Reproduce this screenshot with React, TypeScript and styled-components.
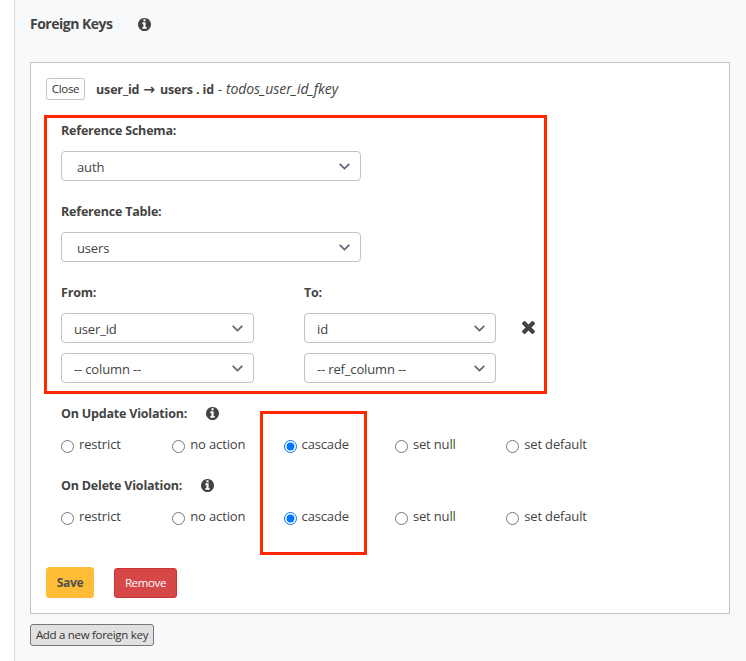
import React from "react";
import styled, { createGlobalStyle } from "styled-components";

const GlobalStyle = createGlobalStyle`
  * { box-sizing: border-box; }
  body {
    margin: 0;
    background: #fff;
    color: #434343;
    font: 13px/18px "Open Sans", sans-serif;
    letter-spacing: -0.15px;
    white-space: nowrap;
    overflow: hidden;
  }
`;

const Page = styled.main`
  height: 661px;
  margin-left: 14px;
  padding: 14px 16px 0 15px;
  background: #f8f9fb;
  border-left: 1px solid #dcdcdc;
`;

const Heading = styled.h2`
  display: flex;
  align-items: center;
  gap: 25px;
  height: 20px;
  margin: 0 0 28px;
  font-size: 14px;
  font-weight: 700;
  letter-spacing: -0.5px;
`;

const Card = styled.section`
  position: relative;
  height: 552px;
  padding: 15px;
  background: #fff;
  border: 1px solid #c2c2c2;
`;

const CardHeader = styled.header`
  display: flex;
  align-items: center;
  height: 22px;
`;

const SmallButton = styled.button`
  width: 39px;
  height: 22px;
  padding: 0;
  color: #333;
  background: #fff;
  border: 1px solid #c4c4c4;
  border-radius: 3px;
  font: 11.5px/20px "Open Sans", sans-serif;
  letter-spacing: -0.3px;
`;

const AddButton = styled(SmallButton)`
  display: block;
  width: 124px;
  margin-top: 10px;
  background: #e1e1e1;
  border-color: #767676;
`;

const KeyName = styled.div`
  display: flex;
  align-items: baseline;
  gap: 4px;
  margin-left: 11px;
  b { font-size: 12.5px; letter-spacing: -0.15px; }
  i { font-size: 14px; letter-spacing: -0.1px; }
`;

const Arrow = styled.span`
  margin-right: 1px;
  font: 700 14px/18px "DejaVu Sans", sans-serif;
`;

const Form = styled.div`
  padding: 21px 15px 0;
`;

const Field = styled.div`
  height: 81px;
`;

const Label = styled.div`
  display: flex;
  align-items: center;
  gap: 19px;
  height: 18px;
  padding-top: 2px;
  font-size: 12.5px;
  font-weight: 700;
  letter-spacing: -0.2px;
  svg { margin-top: -2px; }
`;

const SelectBox = styled.div<{ $wide?: boolean }>`
  display: flex;
  align-items: center;
  justify-content: space-between;
  width: ${(p) => (p.$wide ? "300px" : "auto")};
  height: 30px;
  padding: 2px 10px 0 ${(p) => (p.$wide ? 15 : 12)}px;
  background: #fff;
  border: 1px solid #c2c2c2;
  border-radius: 4px;
  svg { margin-top: -2px; }
`;

const Spaced = styled.div`
  margin-top: 12px;
`;

const Mapping = styled.div`
  display: grid;
  grid-template-columns: 193px 192px 14px;
  column-gap: 50px;
  height: 121px;
`;

const MapColumn = styled.div`
  display: flex;
  flex-direction: column;
  gap: 10px;
  ${Label} { margin-bottom: 2px; }
`;

const RemoveRow = styled.div`
  margin: 38px 0 0 -24px;
  svg { display: block; }
`;

const Violation = styled.div`
  height: 72px;
`;

const Options = styled.div`
  display: grid;
  grid-template-columns: repeat(5, 111.3px);
  margin-top: 13px;
`;

const Option = styled.label`
  display: flex;
  gap: 5px;
  height: 20px;
  input { width: 13px; height: 13px; margin: 5px 0 0; }
`;

const Actions = styled.footer`
  display: flex;
  align-items: flex-end;
  gap: 20px;
  margin-top: 19px;
`;

const ActionButton = styled.button<{ $danger?: boolean }>`
  width: ${(p) => (p.$danger ? 63 : 48)}px;
  height: ${(p) => (p.$danger ? 30 : 31)}px;
  padding: 0;
  color: ${(p) => (p.$danger ? "#fff" : "#505050")};
  background: ${(p) => (p.$danger ? "#d64848" : "#ffbc36")};
  border: 1px solid ${(p) => (p.$danger ? "#cc3236" : "#ffbc36")};
  border-radius: 3px;
  font: ${(p) => (p.$danger ? "400 11.5px" : "700 12px")}/18px "Open Sans", sans-serif;
  letter-spacing: -0.35px;
`;

const Highlight = styled.div<{ $x: number; $y: number; $w: number; $h: number }>`
  position: absolute;
  left: ${(p) => p.$x}px;
  top: ${(p) => p.$y}px;
  width: ${(p) => p.$w}px;
  height: ${(p) => p.$h}px;
  border: 3px solid #ff2600;
  pointer-events: none;
`;

const Info = () => (
  <svg width="13" height="13" viewBox="128 128 1536 1536" fill="#434343">
    <path d="M1152 1376v-160q0-14-9-23t-23-9h-96v-512q0-14-9-23t-23-9h-320q-14 0-23 9t-9 23v160q0 14 9 23t23 9h96v320h-96q-14 0-23 9t-9 23v160q0 14 9 23t23 9h448q14 0 23-9t9-23zm-128-896v-160q0-14-9-23t-23-9h-192q-14 0-23 9t-9 23v160q0 14 9 23t23 9h192q14 0 23-9t9-23zm640 416q0 209-103 385.5t-279.5 279.5-385.5 103-385.5-103-279.5-279.5-103-385.5 103-385.5 279.5-279.5 385.5-103 385.5 103 279.5 279.5 103 385.5z" />
  </svg>
);

const Chevron = () => (
  <svg width="11" height="7" viewBox="0 0 11 7" fill="none" stroke="#5c6675" strokeWidth="1.7">
    <path d="M.7 .8 5.5 5.6 10.3 .8" />
  </svg>
);

const Cross = () => (
  <svg width="13" height="13" viewBox="110 366 1188 1188" fill="#434343">
    <path d="M1298 1322q0 40-28 68l-136 136q-28 28-68 28t-68-28l-294-294-294 294q-28 28-68 28t-68-28l-136-136q-28-28-28-68t28-68l294-294-294-294q-28-28-28-68t28-68l136-136q28-28 68-28t68 28l294 294 294-294q28-28 68-28t68 28l136 136q28 28 28 68t-28 68l-294 294 294 294q28 28 28 68z" />
  </svg>
);

const Select = ({ value, wide }: { value: string; wide?: boolean }) => (
  <SelectBox $wide={wide} role="combobox">
    <span>{value}</span>
    <Chevron />
  </SelectBox>
);

const ACTIONS = ["restrict", "no action", "cascade", "set null", "set default"];

const ViolationField = ({ event }: { event: "Update" | "Delete" }) => (
  <Violation>
    <Label>
      <span>On {event} Violation:</span>
      <Info />
    </Label>
    <Options>
      {ACTIONS.map((action) => (
        <Option key={action}>
          <input type="radio" name={event} defaultChecked={action === "cascade"} />
          {action}
        </Option>
      ))}
    </Options>
  </Violation>
);

export default function App() {
  return (
    <>
      <GlobalStyle />
      <Page>
        <Heading>
          Foreign Keys
          <Info />
        </Heading>
        <Card>
          <CardHeader>
            <SmallButton>Close</SmallButton>
            <KeyName>
              <b>user_id</b>
              <Arrow>→</Arrow>
              <b>users . id</b>
              <span>-</span>
              <i>todos_user_id_fkey</i>
            </KeyName>
          </CardHeader>
          <Form>
            <Field>
              <Label>Reference Schema:</Label>
              <Spaced><Select value="auth" wide /></Spaced>
            </Field>
            <Field>
              <Label>Reference Table:</Label>
              <Spaced><Select value="users" wide /></Spaced>
            </Field>
            <Mapping>
              <MapColumn>
                <Label>From:</Label>
                <Select value="user_id" />
                <Select value="-- column --" />
              </MapColumn>
              <MapColumn>
                <Label>To:</Label>
                <Select value="id" />
                <Select value="-- ref_column --" />
              </MapColumn>
              <RemoveRow><Cross /></RemoveRow>
            </Mapping>
            <ViolationField event="Update" />
            <ViolationField event="Delete" />
          </Form>
          <Actions>
            <ActionButton>Save</ActionButton>
            <ActionButton $danger>Remove</ActionButton>
          </Actions>
          <Highlight $x={13} $y={52} $w={503} $h={279} />
          <Highlight $x={229} $y={348} $w={107} $h={144} />
        </Card>
        <AddButton>Add a new foreign key</AddButton>
      </Page>
    </>
  );
}
